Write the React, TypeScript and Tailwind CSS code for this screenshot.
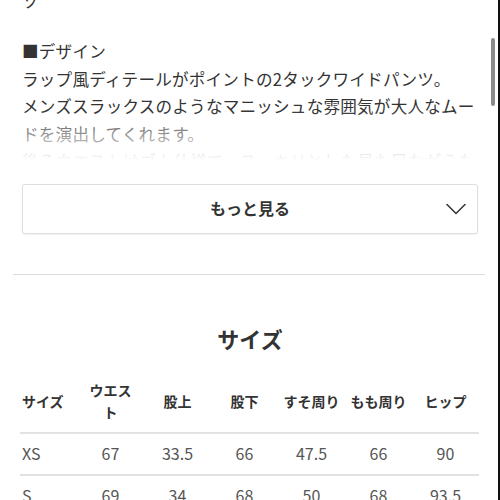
const font = { fontFamily: '"Noto Sans CJK JP", "Noto Sans", sans-serif' };

const headers = ['サイズ', 'ウエスト', '股上', '股下', 'すそ周り', 'もも周り', 'ヒップ'];
const rows = [
  ['XS', '67', '33.5', '66', '47.5', '66', '90'],
  ['S', '69', '34', '68', '50', '68', '93.5'],
];

export default function App() {
  return (
    <div
      className="relative w-[500px] h-[500px] overflow-hidden bg-white text-[#333]"
      style={font}
    >
      <div className="px-[22px]">
        {/* tail of the previous paragraph */}
        <div className="h-[38px] overflow-hidden">
          <p className="mt-[-13px] text-[16.6px] leading-[28px]">ソ</p>
        </div>

        {/* description, faded out at the bottom */}
        <div className="relative h-[122px] overflow-hidden text-[16.6px] leading-[27.5px] tracking-[0.2px]">
          <p>■デザイン</p>
          <p>ラップ風ディテールがポイントの2タックワイドパンツ。</p>
          <p>メンズスラックスのようなマニッシュな雰囲気が大人なムードを演出してくれます。</p>
          <p>後ろウエストはゴム仕様で、スッキリとした見た目ながらも楽な履き心地です。</p>
          <div className="absolute inset-x-0 bottom-0 h-[50px] bg-gradient-to-b from-white/0 to-white" />
        </div>

        <button className="mt-[24px] relative flex h-[50px] w-full items-center justify-center rounded-[3px] border border-[#dedede] bg-white shadow-[0_1px_2px_rgba(0,0,0,0.06)]">
          <span className="mt-[-2px] text-[16px] font-bold text-[#333]">もっと見る</span>
          <svg
            className="absolute right-[11px] top-1/2 -translate-y-1/2"
            width="20"
            height="12"
            viewBox="0 0 20 12"
            fill="none"
          >
            <polyline
              points="1,1.5 10,10.5 19,1.5"
              stroke="#333"
              strokeWidth="1.5"
              strokeLinecap="round"
              strokeLinejoin="round"
            />
          </svg>
        </button>
      </div>

      <div className="mt-[40px] ml-[13px] mr-[15px] h-px bg-[#dcdcdc]" />

      <h2 className="mt-[47px] text-center text-[22px] font-bold leading-[32px] text-[#333]">
        サイズ
      </h2>

      <div className="mt-[10px] px-[20px]">
        <table className="w-[459px] table-fixed border-collapse">
          <colgroup>
            <col className="w-[57px]" />
            <col className="w-[67px]" />
            <col className="w-[67px]" />
            <col className="w-[67px]" />
            <col className="w-[67px]" />
            <col className="w-[67px]" />
            <col className="w-[67px]" />
          </colgroup>
          <thead>
            <tr className="border-b-2 border-[#e2e2e2]">
              {headers.map((h, i) => (
                <th
                  key={h}
                  className={`pt-[15px] pb-[9px] text-[14px] font-bold leading-[22px] text-[#333] ${
                    i === 0 ? 'pl-[2px] text-left' : 'text-center'
                  }`}
                >
                  {h === 'ウエスト' ? (
                    <>
                      ウエス
                      <br />ト
                    </>
                  ) : (
                    h
                  )}
                </th>
              ))}
            </tr>
          </thead>
          <tbody>
            {rows.map((r) => (
              <tr key={r[0]} className="border-b-2 border-[#e2e2e2]">
                {r.map((c, i) => (
                  <td
                    key={i}
                    className={`pt-[7px] pb-[9px] text-[16px] leading-[24px] text-[#555] ${
                      i === 0 ? 'pl-[2px] text-left' : 'text-center'
                    }`}
                  >
                    {c}
                  </td>
                ))}
              </tr>
            ))}
          </tbody>
        </table>
      </div>

      {/* scrollbar thumb and window edge */}
      <div className="absolute left-[491px] top-[38px] h-[68px] w-[4px] rounded-full bg-[#8a8a8a]" />
      <div className="absolute right-0 top-0 h-full w-[2px] bg-[#111]" />
    </div>
  );
}
